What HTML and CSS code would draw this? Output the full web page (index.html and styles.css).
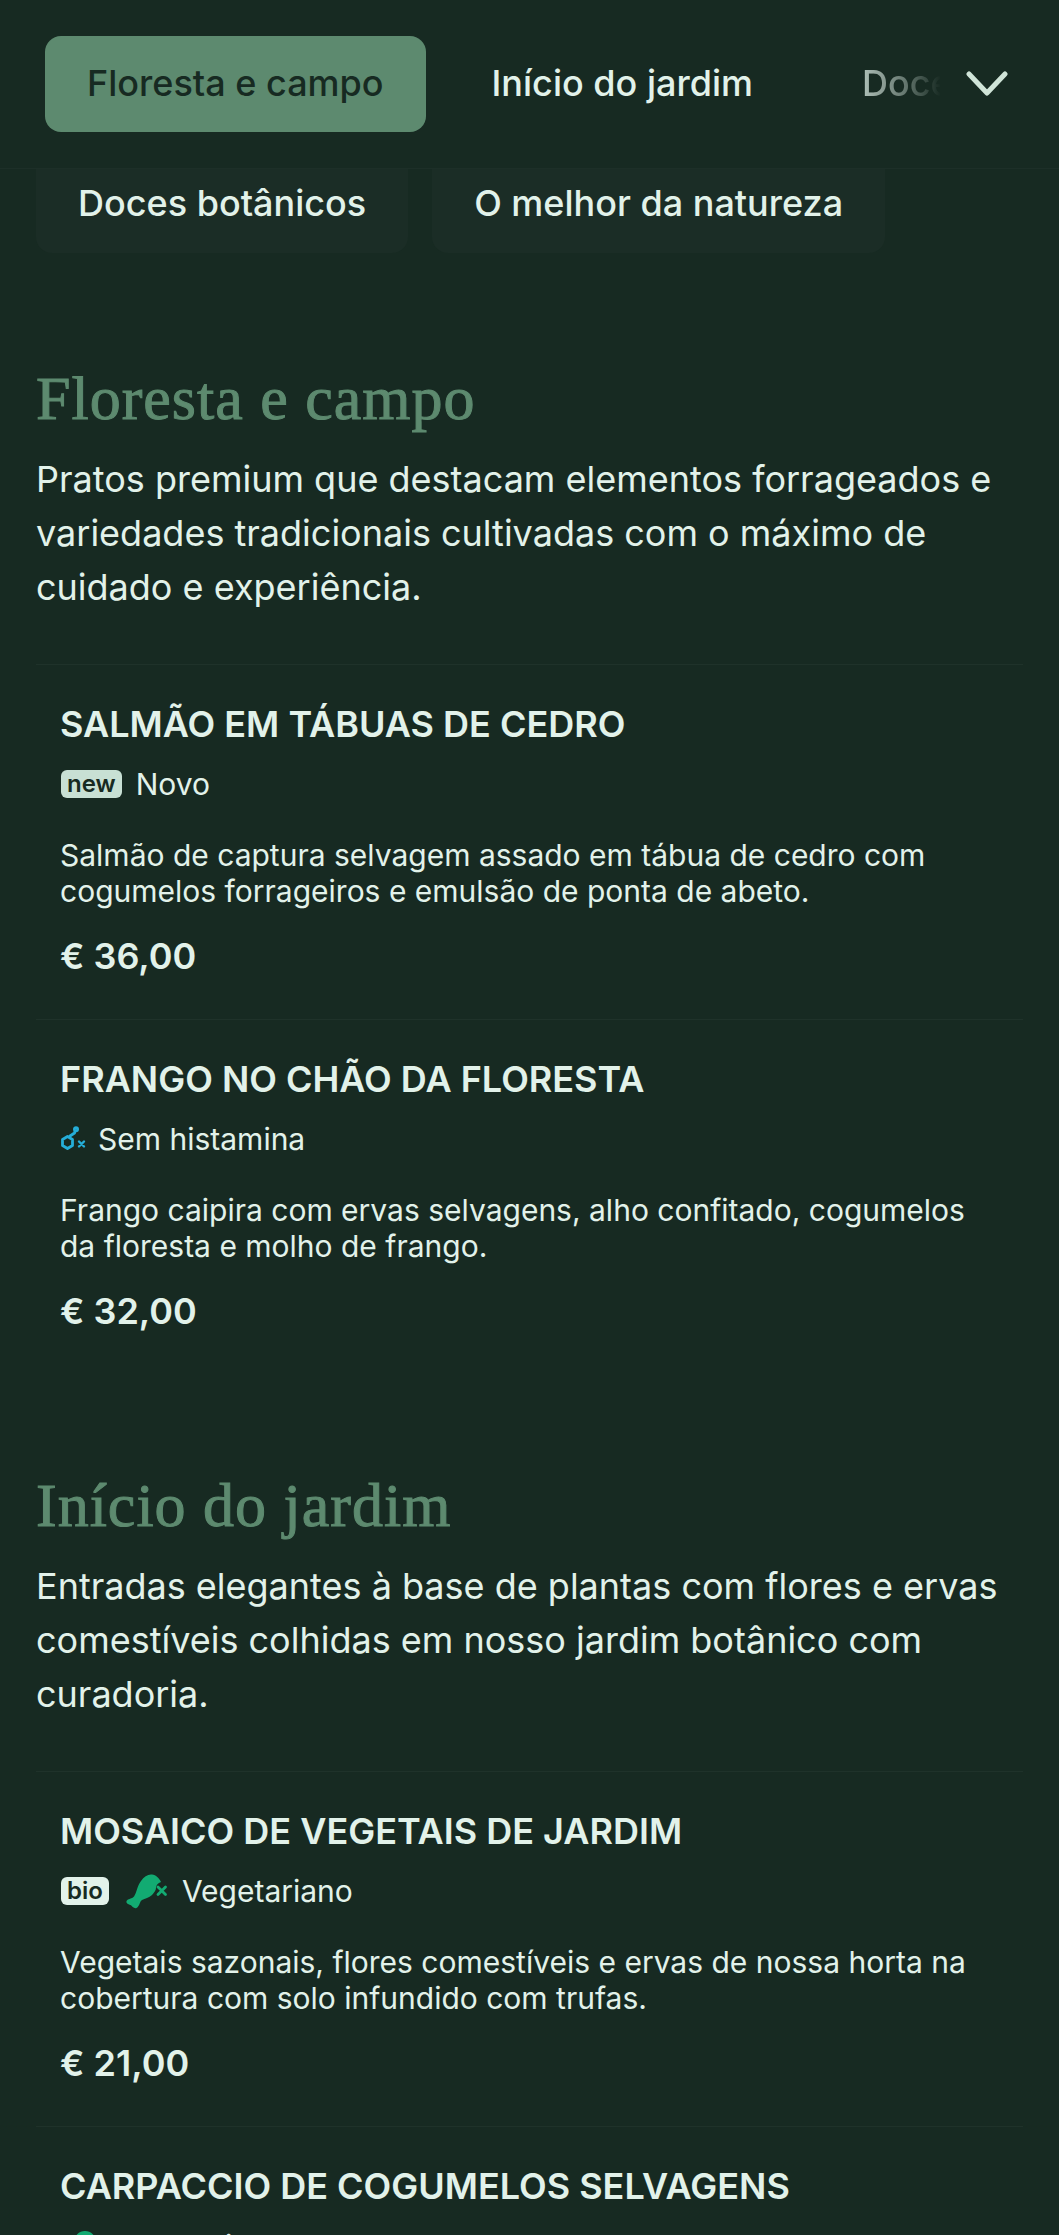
FILE: index.html
```html
<!DOCTYPE html>
<html lang="pt">
<head>
<meta charset="utf-8">
<title>Menu</title>
<link rel="stylesheet" href="styles.css">
</head>
<body>
<header class="topbar">
  <nav class="tabs">
    <a class="tab tab-active">Floresta e campo</a>
    <a class="tab">Início do jardim</a>
    <a class="tab tab-fade">Doces botânicos</a>
  </nav>
  <svg class="chevron" viewBox="0 0 42 26" width="42" height="26"><path d="M3 3 L21 22 L39 3" fill="none" stroke="#d0e4d8" stroke-width="5" stroke-linecap="round" stroke-linejoin="round"/></svg>
</header>
<div class="subtabs">
  <a class="subtab">Doces botânicos</a>
  <a class="subtab">O melhor da natureza</a>
</div>
<main>
  <section class="section section-first">
    <h2>Floresta e campo</h2>
    <p class="intro">Pratos premium que destacam elementos forrageados e variedades tradicionais cultivadas com o máximo de cuidado e experiência.</p>
    <article class="item">
      <h3>SALMÃO EM TÁBUAS DE CEDRO</h3>
      <div class="tags"><span class="badge badge-new">new</span><span>Novo</span></div>
      <p class="desc">Salmão de captura selvagem assado em tábua de cedro com cogumelos forrageiros e emulsão de ponta de abeto.</p>
      <div class="price">€ 36,00</div>
    </article>
    <article class="item">
      <h3>FRANGO NO CHÃO DA FLORESTA</h3>
      <div class="tags tags-tight">
        <svg class="icon-hist" viewBox="0 0 26 26" width="26" height="26"><g fill="none" stroke="#25aed9" stroke-width="2.8" stroke-linejoin="round" stroke-linecap="round"><path d="M7.5 10.5 L12.5 13.5 L12.5 19.5 L7.5 22.5 L2.5 19.5 L2.5 13.5 Z"/><path d="M10 10 L14.5 7 L15 5.5"/><circle cx="16" cy="3.2" r="1.6"/></g><path d="M19 15.5 L24 20.5 M24 15.5 L19 20.5" stroke="#25aed9" stroke-width="2.4" stroke-linecap="round"/></svg>
        <span>Sem histamina</span>
      </div>
      <p class="desc">Frango caipira com ervas selvagens, alho confitado, cogumelos da floresta e molho de frango.</p>
      <div class="price">€ 32,00</div>
    </article>
  </section>
  <section class="section">
    <h2>Início do jardim</h2>
    <p class="intro">Entradas elegantes à base de plantas com flores e ervas comestíveis colhidas em nosso jardim botânico com curadoria.</p>
    <article class="item">
      <h3>MOSAICO DE VEGETAIS DE JARDIM</h3>
      <div class="tags">
        <span class="badge badge-bio">bio</span>
        <svg class="icon-leg" viewBox="0 0 42 36" width="42" height="36"><path d="M0.5 28 C2 25.5 6 26 8 23.5 C11 19 11 13 15 8 C18 3.5 22 1 26 1.5 C30 2 33 5 35 9 C32 10 30 12 30 15 C30 17 28 20 26 22 C23 24.5 19 25.5 16 27 C13.5 28.5 14 33 10.5 35 C8 36 6 33 4.5 32 C2.5 31 0 31 0.5 28 Z" fill="#12ab72"/><path d="M32 14 L39.5 21.5 M39.5 14 L32 21.5" stroke="#12ab72" stroke-width="2.8" stroke-linecap="round"/></svg>
        <span>Vegetariano</span>
      </div>
      <p class="desc">Vegetais sazonais, flores comestíveis e ervas de nossa horta na cobertura com solo infundido com trufas.</p>
      <div class="price">€ 21,00</div>
    </article>
    <article class="item">
      <h3>CARPACCIO DE COGUMELOS SELVAGENS</h3>
      <div class="tags tags-tight">
        <svg class="icon-dome" viewBox="0 0 42 36" width="42" height="36"><circle cx="25" cy="14" r="11" fill="#12ab72"/></svg>
        <span>Vegetariano</span>
      </div>
    </article>
  </section>
</main>
</body>
</html>
```
FILE: styles.css
```css
* { box-sizing: border-box; }
html, body { margin: 0; padding: 0; }
body {
  height: 2235px;
  overflow: hidden;
  background: #172a22;
  color: #e2f2ea;
  font-family: Inter, "Liberation Sans", sans-serif;
}
.topbar {
  height: 169px;
  display: flex;
  align-items: center;
  padding: 0 0 0 45px;
  border-bottom: 1px solid #1d2f28;
  position: relative;
}
.tabs {
  display: flex;
  align-items: center;
  gap: 23px;
  width: 900px;
  overflow: hidden;
  white-space: nowrap;
}
.tab {
  font-size: 36px;
  font-weight: 500;
  height: 96px;
  line-height: 94px;
  padding: 0 43px;
  flex: none;
  color: #e2f2ea;
}
.tab-active {
  background: #5d8a6f;
  color: #172a22;
  border-radius: 16px;
  padding: 0 42px;
}
.tab-fade {
  -webkit-mask-image: linear-gradient(to right, rgba(0,0,0,0.75) 43px, rgba(0,0,0,0.4) 85px, rgba(0,0,0,0) 122px);
  mask-image: linear-gradient(to right, rgba(0,0,0,0.75) 43px, rgba(0,0,0,0.4) 85px, rgba(0,0,0,0) 122px);
}
.chevron { position: absolute; left: 966px; top: 71px; }
.subtabs {
  display: flex;
  gap: 24px;
  padding: 0 36px;
}
.subtab {
  height: 84px;
  padding: 0 42px;
  line-height: 69px;
  font-size: 36px;
  font-weight: 500;
  background: #1b2d26;
  border-radius: 0 0 16px 16px;
  color: #e2f2ea;
}
main { padding: 0 36px; }
.section { padding-top: 92px; }
.section-first { padding-top: 106px; }
h2 {
  margin: 0;
  font-family: "Liberation Serif", serif;
  font-weight: 400;
  font-size: 62px;
  letter-spacing: 1px;
  -webkit-text-stroke: 1px #5d8a6f;
  line-height: 78px;
  color: #5d8a6f;
}
.intro {
  margin: 15px 0 0;
  font-size: 36px;
  line-height: 54px;
  color: #e2f2ea;
}
.item {
  margin-top: 50px;
  padding: 34px 24px 38px;
  border-top: 1px solid #1f322a;
}
.item + .item { margin-top: 0; }
h3 {
  margin: 0;
  font-size: 36px;
  font-weight: 600;
  line-height: 50px;
  color: #e2f2ea;
}
.tags {
  display: flex;
  align-items: center;
  gap: 14px;
  font-size: 30px;
  line-height: 40px;
  margin-top: 15px;
  color: #e2f2ea;
}
.tags-tight { gap: 12px; }
.badge {
  font-size: 24px;
  font-weight: 600;
  line-height: 28px;
  border-radius: 6px;
  padding: 0 6px;
  margin-left: 1px;
  color: #172a22;
  background: #c8e0d4;
}
.badge-new { background: #c8e0d4; }
.badge-bio { background: #e2f2ea; margin-right: 3px; }
.desc {
  margin: 33px 0 0;
  font-size: 30px;
  line-height: 36px;
  color: #e2f2ea;
}
.price {
  margin-top: 22px;
  font-size: 36px;
  font-weight: 600;
  line-height: 50px;
}
```
